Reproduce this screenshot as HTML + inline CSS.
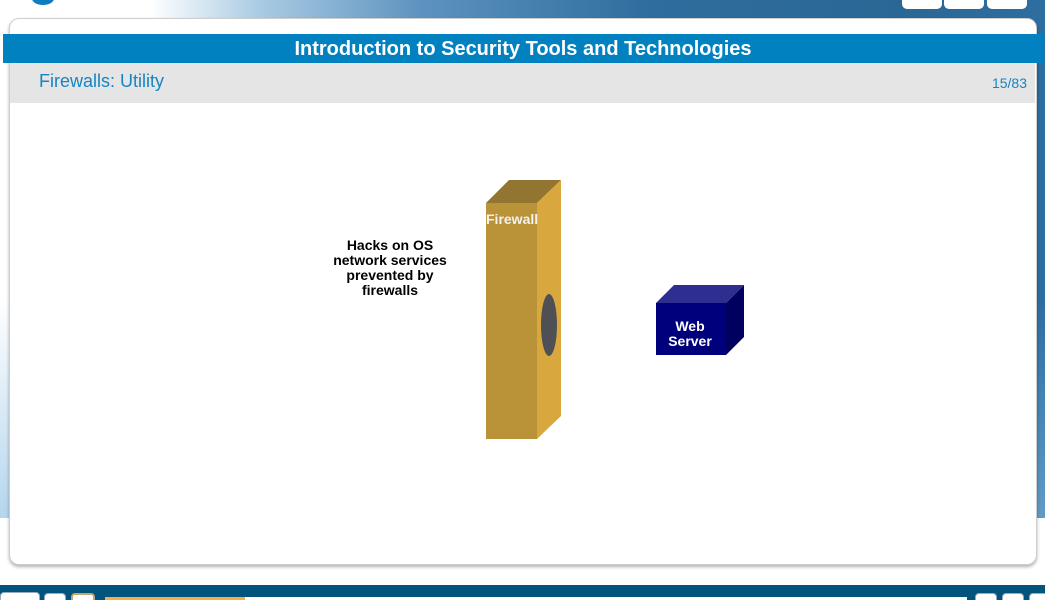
<!DOCTYPE html>
<html><head><style>
html,body{margin:0;width:1045px;height:600px;overflow:hidden}
body{position:relative;background:#fff;font-family:"Liberation Sans",Arial,sans-serif}
.bg{position:absolute;left:0;top:0;width:1045px;height:518px;background:linear-gradient(90deg,#fff 0,#fff 150px,#a9cbe3 260px,#5d93bf 420px,#2f6d9e 650px,#2b6795 900px,#2d6ea0 1045px)}
.bgl{position:absolute;left:0;top:0;width:1045px;height:518px;background:linear-gradient(180deg,rgba(0,0,0,0) 0,rgba(0,0,0,0) 300px,rgba(130,185,225,.6) 518px)}
.btn{position:absolute;top:-6px;width:40px;height:15px;background:#fff;border-radius:0 0 5px 5px}
.card{position:absolute;left:9px;top:18px;width:1026px;height:545px;background:#fff;border-radius:10px;border:1px solid #cfcfcf;box-shadow:0 2px 3px rgba(0,0,0,.3)}
.title{position:absolute;left:3px;top:34px;width:1040px;height:29px;background:#0281c0;color:#fff;font-weight:bold;font-size:20px;text-align:center;line-height:30px}
.sub{position:absolute;left:10px;top:63px;width:1025px;height:40px;background:#e5e5e5}
.sub span{position:absolute;left:29px;top:8px;font-size:18px;color:#1585c3}
.sub i{position:absolute;right:8px;top:12px;font-size:14px;color:#1585c3;font-style:normal}
.foot{position:absolute;left:0;top:585px;width:1045px;height:15px;background:#02547c}
.txt{position:absolute;font-weight:bold;font-size:14px;text-align:center;line-height:15px}
</style></head><body>
<div class="bg"></div><div class="bgl"></div>
<div style="position:absolute;left:32px;top:-8px;width:22px;height:13px;border-radius:50%;background:#0b7dc0"></div>
<div class="btn" style="left:902px"></div><div class="btn" style="left:944px"></div><div class="btn" style="left:987px"></div>
<div class="card"></div>
<div class="title">Introduction to Security Tools and Technologies</div>
<div class="sub"><span>Firewalls: Utility</span><i>15/83</i></div>
<svg style="position:absolute;left:0;top:0" width="1045" height="600">
<polygon points="486,203 509,180 561,180 537,203" fill="#917530"/>
<polygon points="537,203 561,180 561,416 537,439" fill="#d8a83e"/>
<rect x="486" y="203" width="51" height="236" fill="#ba9238"/>
<ellipse cx="549" cy="325" rx="8" ry="31" fill="#4e5055"/>
<polygon points="656,303 674,285 744,285 726,303" fill="#2e2e90"/>
<polygon points="726,303 744,285 744,337 726,355" fill="#000060"/>
<rect x="656" y="303" width="70" height="52" fill="#00007c"/>
</svg>
<div class="txt" style="left:486px;top:212px;color:#f2f2f2">Firewall</div>
<div class="txt" style="left:320px;top:238px;width:140px">Hacks on OS<br>network services<br>prevented by<br>firewalls</div>
<div class="txt" style="left:655px;top:319px;width:70px;color:#fff">Web<br>Server</div>
<div class="foot"></div>
<div style="position:absolute;left:0;top:592px;width:38px;height:10px;border:1px solid #9ab;border-radius:4px;background:#fff"></div>
<div style="position:absolute;left:44px;top:593px;width:20px;height:10px;border:1px solid #9ab;border-radius:4px;background:#fff"></div>
<div style="position:absolute;left:71px;top:593px;width:20px;height:10px;border:2px solid #c9a66a;border-radius:4px;background:#fff"></div>
<div style="position:absolute;left:105px;top:597px;width:862px;height:3px;background:#fff"></div>
<div style="position:absolute;left:105px;top:597px;width:140px;height:3px;background:#f6ae45"></div>
<div style="position:absolute;left:975px;top:593px;width:20px;height:10px;border:1px solid #9ab;border-radius:4px;background:#fff"></div>
<div style="position:absolute;left:1002px;top:593px;width:20px;height:10px;border:1px solid #9ab;border-radius:4px;background:#fff"></div>
<div style="position:absolute;left:1029px;top:593px;width:20px;height:10px;border:1px solid #9ab;border-radius:4px;background:#fff"></div>
</body></html>
